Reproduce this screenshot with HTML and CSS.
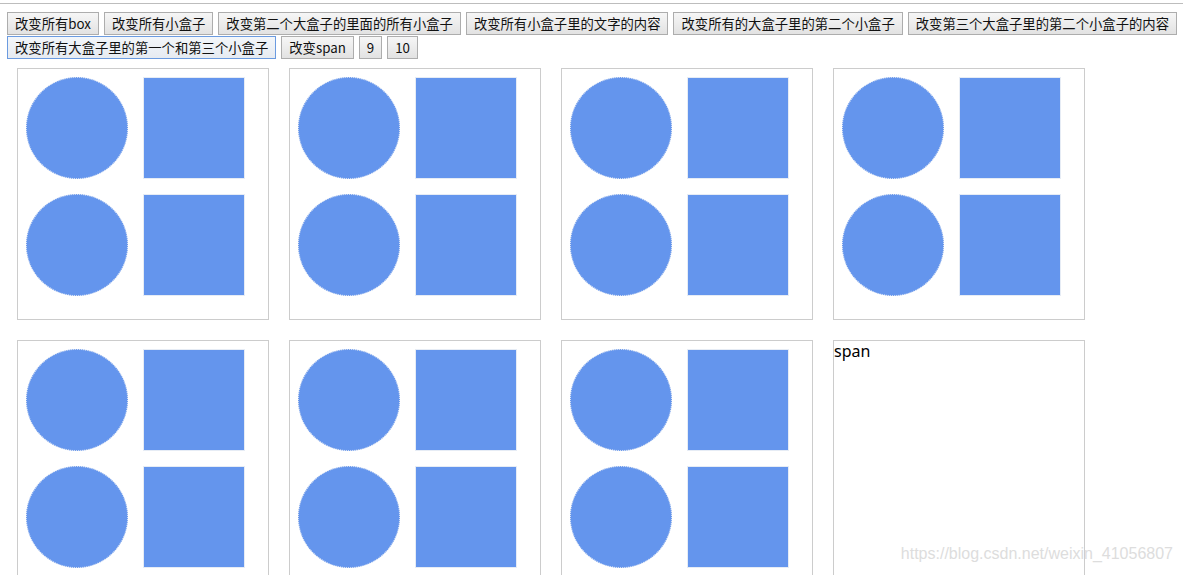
FILE: index.html
```html
<!DOCTYPE html>
<html>
<head>
<meta charset="utf-8">
<title>box</title>
<link rel="stylesheet" href="styles.css">
</head>
<body>
<div class="topline"></div>
<div class="toolbar">
  <button class="btn">改变所有box</button>
  <button class="btn">改变所有小盒子</button>
  <button class="btn">改变第二个大盒子的里面的所有小盒子</button>
  <button class="btn">改变所有小盒子里的文字的内容</button>
  <button class="btn">改变所有的大盒子里的第二个小盒子</button>
  <button class="btn">改变第三个大盒子里的第二个小盒子的内容</button>
  <button class="btn focused">改变所有大盒子里的第一个和第三个小盒子</button>
  <button class="btn">改变span</button>
  <button class="btn">9</button>
  <button class="btn">10</button>
</div>
<div class="boxes">
  <div class="box"><div class="small circle"></div><div class="small"></div><div class="small circle"></div><div class="small"></div></div>
  <div class="box"><div class="small circle"></div><div class="small"></div><div class="small circle"></div><div class="small"></div></div>
  <div class="box"><div class="small circle"></div><div class="small"></div><div class="small circle"></div><div class="small"></div></div>
  <div class="box"><div class="small circle"></div><div class="small"></div><div class="small circle"></div><div class="small"></div></div>
  <div class="box"><div class="small circle"></div><div class="small"></div><div class="small circle"></div><div class="small"></div></div>
  <div class="box"><div class="small circle"></div><div class="small"></div><div class="small circle"></div><div class="small"></div></div>
  <div class="box"><div class="small circle"></div><div class="small"></div><div class="small circle"></div><div class="small"></div></div>
  <div class="box span-box"><span class="span-text">span</span></div>
</div>
<div class="watermark">https://blog.csdn.net/weixin_41056807</div>
</body>
</html>
```
FILE: styles.css
```css
html, body {
  margin: 0;
  padding: 0;
  background: #fff;
  overflow: hidden;
  height: 575px;
}
body {
  position: relative;
  font-family: "Noto Sans CJK SC", "Noto Sans", sans-serif;
}
.topline {
  height: 3px;
  border-bottom: 1px solid #bdbdbd;
}
.toolbar {
  display: flex;
  flex-wrap: wrap;
  column-gap: 5px;
  row-gap: 1px;
  padding: 8px 0 0 7px;
}
.btn {
  height: 23px;
  margin: 0;
  padding: 0 7px;
  border: 1px solid #adadad;
  border-radius: 0;
  background: linear-gradient(#f6f6f6, #e2e2e2);
  font-family: "Noto Sans CJK SC", "Liberation Sans", sans-serif;
  font-size: 13.333px;
  line-height: 21px;
  color: #111;
  white-space: nowrap;
}
.btn.focused {
  border-color: #6b9be0;
  background: linear-gradient(#f3f6fa, #e6ebf1);
}
.boxes {
  display: grid;
  grid-template-columns: repeat(4, 252px);
  gap: 20px;
  margin: 9px 0 0 17px;
}
.box {
  box-sizing: border-box;
  width: 252px;
  height: 252px;
  border: 1px solid #cccccc;
  padding: 8px;
  display: grid;
  grid-template-columns: 102px 102px;
  grid-auto-rows: 102px;
  gap: 15px;
  align-content: start;
}
.small {
  background: #6495ed;
  border: 1px solid #e6ecf5;
  width: 100px;
  height: 100px;
}
.circle {
  border-radius: 50%;
  border: 1px dotted #d6e0f2;
}
.span-box {
  display: block;
  padding: 0;
}
.span-text {
  display: block;
  font-family: "Noto Sans", "Open Sans", sans-serif;
  font-size: 16px;
  line-height: 21px;
  color: #000;
}
.watermark {
  position: absolute;
  right: 10px;
  top: 545px;
  font-family: "Liberation Sans", Arial, sans-serif;
  font-size: 16px;
  line-height: 18px;
  color: #dddddd;
}
```
